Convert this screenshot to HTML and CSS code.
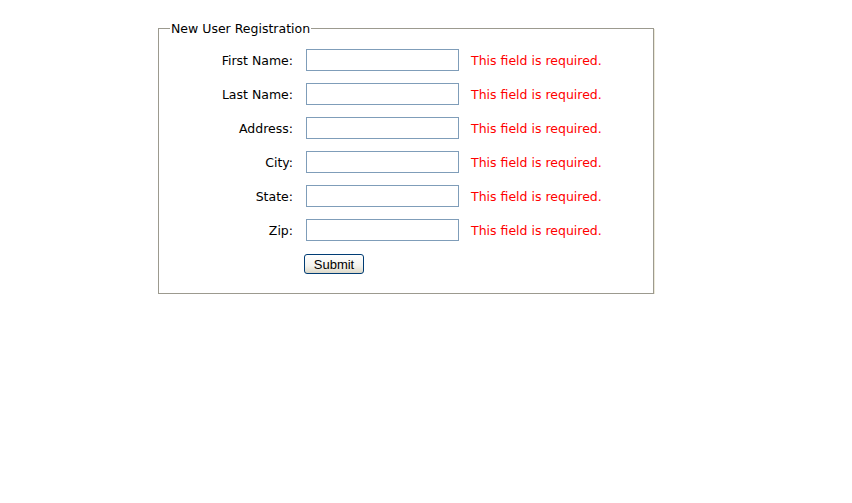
FILE: index.html
```html
<!DOCTYPE html>
<html lang="en">
<head>
    <meta charset="UTF-8">
    <title>New User Registration</title>
    <link rel="stylesheet" href="styles.css">
</head>
<body>

    <form class="reg" action="#">
        <fieldset class="box">
            <legend>New User Registration</legend>
            <div class="rows">
                <label for="first">First Name:</label>
                <input type="text" id="first">
                <span class="err">This field is required.</span>

                <label for="last">Last Name:</label>
                <input type="text" id="last">
                <span class="err">This field is required.</span>

                <label for="addr">Address:</label>
                <input type="text" id="addr">
                <span class="err">This field is required.</span>

                <label for="city">City:</label>
                <input type="text" id="city">
                <span class="err">This field is required.</span>

                <label for="state">State:</label>
                <input type="text" id="state">
                <span class="err">This field is required.</span>

                <label for="zip">Zip:</label>
                <input type="text" id="zip">
                <span class="err">This field is required.</span>

                <span></span>
                <div class="btn-cell"><button type="submit" class="btn">Submit</button></div>
                <span></span>
            </div>
        </fieldset>
    </form>

</body>
</html>
```

FILE: styles.css
```css
*{margin: 0;padding: 0;box-sizing: border-box;}
body{font-size: 12.5px; font-family: "DejaVu Sans", Verdana, sans-serif; color: #000; background: #fff;}

.reg{padding: 21px 0 0 158px;}
.box{width: 496px; border: 1px solid #9c9a8f; box-shadow: inset 1px 1px 0 #fff, 1px 1px 0 #ece9d8; padding: 13px 0 19px 0;}
.box legend{margin-left: 11px; padding: 0 1px; font-size: 12.5px; line-height: 15px; color: #000;}

.rows{display: grid; grid-template-columns: 134px 153px auto; column-gap: 13px; row-gap: 12px; align-items: center;}
.rows label{text-align: right;}
.rows input{width: 153px; height: 22px; border: 1px solid #7f9db9; font-family: inherit; font-size: 12.5px; padding: 2px 3px;}
.err{color: #ff0000; margin-left: -1px; padding-top: 1px;}

.btn-cell{margin-left: -2px; padding-top: 1px;}
.btn{width: 60px; height: 20px; font-family: "Liberation Sans", Arial, sans-serif; font-size: 13px; color: #000; border: 1px solid #003c74; border-radius: 3px; background: linear-gradient(#fff, #f4f3ee 60%, #dcd8c8); cursor: pointer;}
```
